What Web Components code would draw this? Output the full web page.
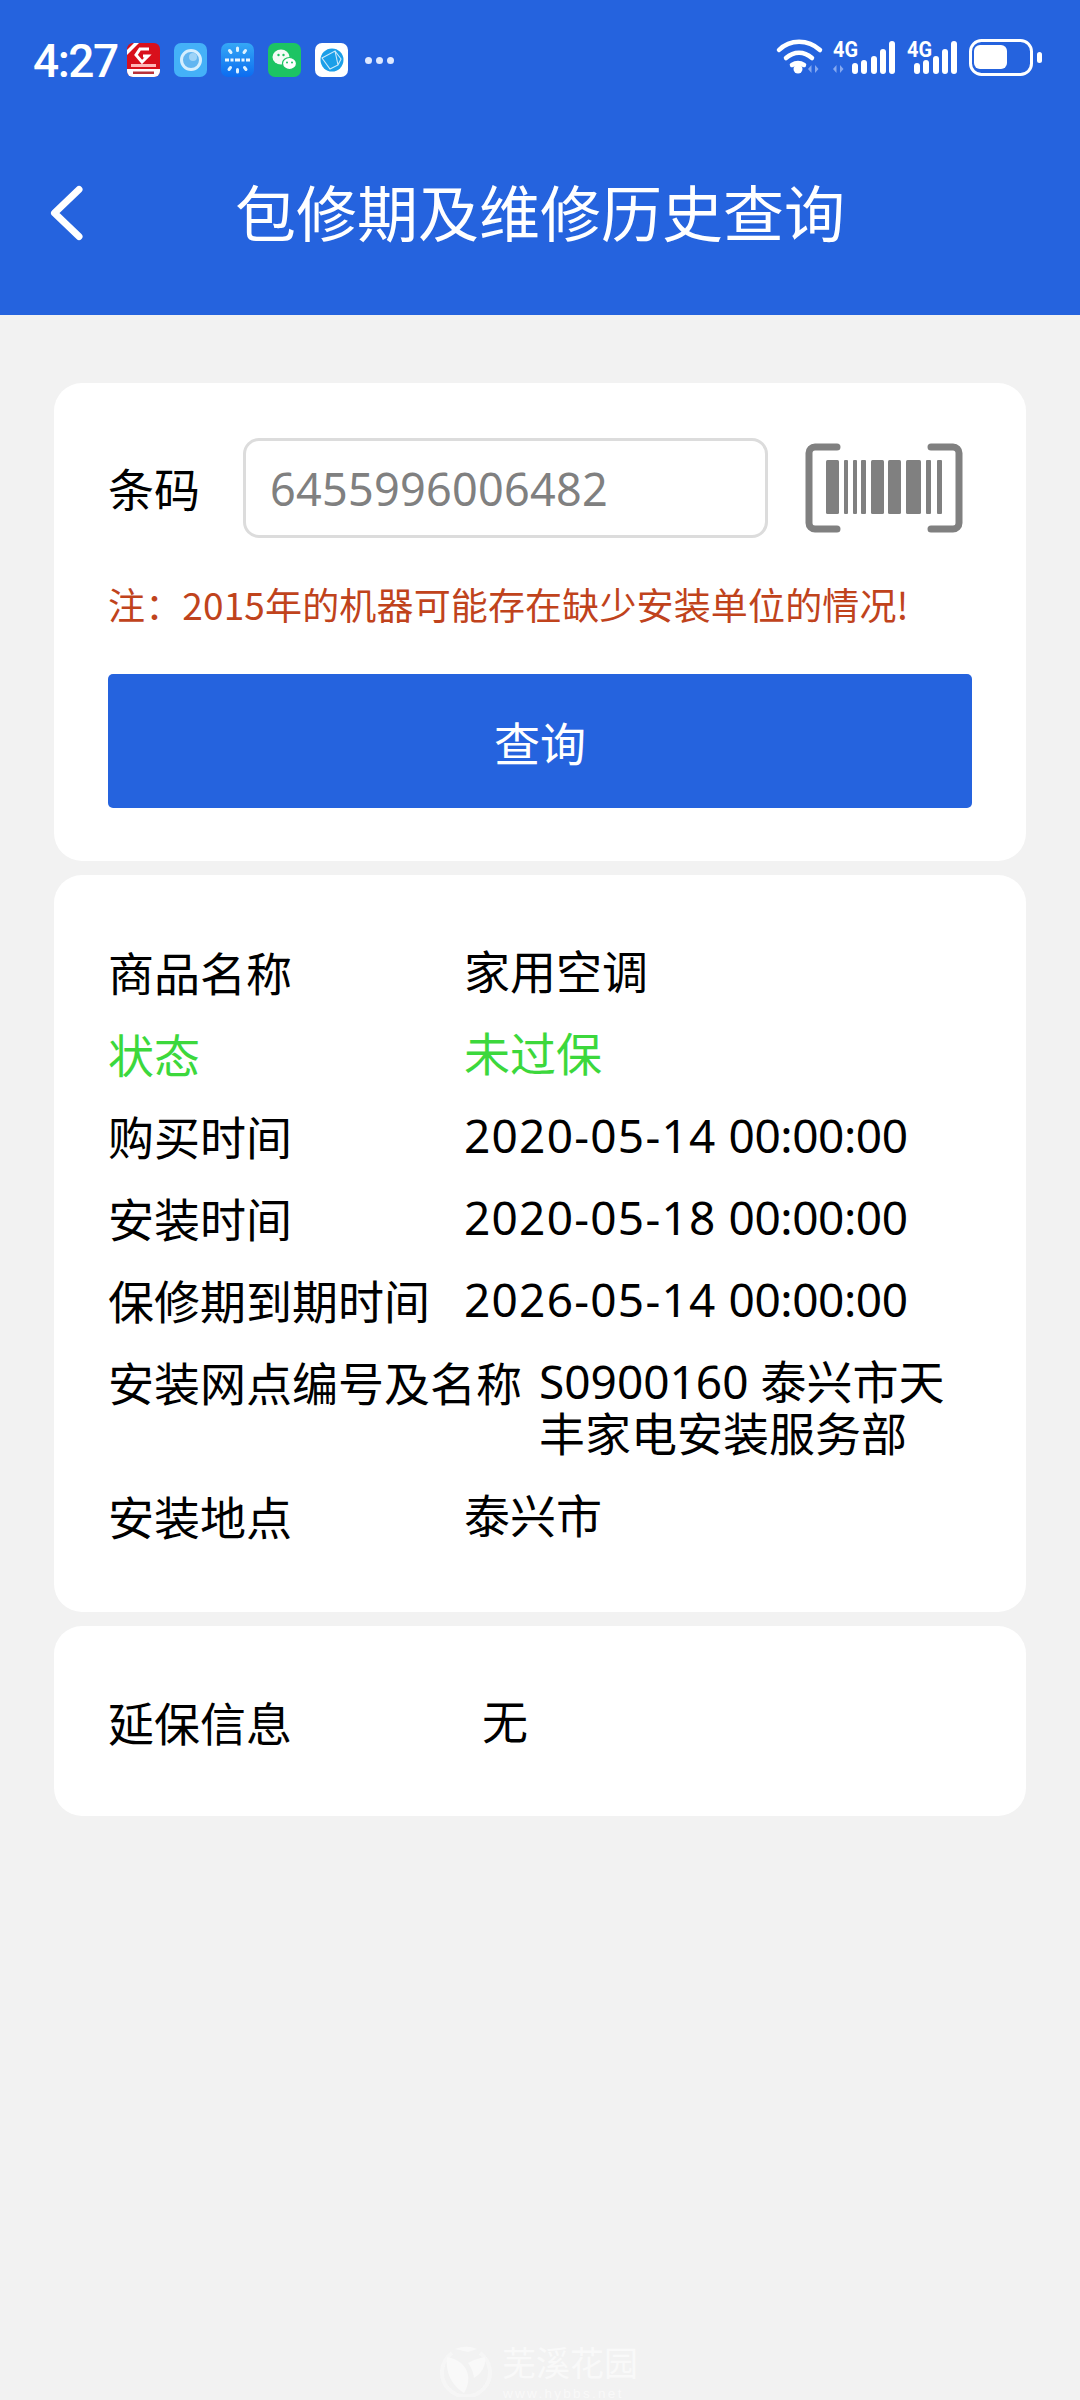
<!DOCTYPE html>
<html lang="zh">
<head>
<meta charset="utf-8">
<title>包修期及维修历史查询</title>
<style>
  html, body { margin: 0; padding: 0; }
  body {
    width: 1080px;
    height: 2400px;
    background: #f2f2f2;
    font-family: "Noto Sans CJK SC", "Noto Sans", sans-serif;
    color: #000;
    position: relative;
    overflow: hidden;
  }
</style>
</head>
<body>
  <top-bar title-text="包修期及维修历史查询"></top-bar>
  <main-list>
    <query-card code="6455996006482" note="注：2015年的机器可能存在缺少安装单位的情况!" action="查询"></query-card>
    <info-card pad="55px 54px 56px">
      <info-row label="商品名称" value="家用空调"></info-row>
      <info-row label="状态" value="未过保" tone="ok"></info-row>
      <info-row label="购买时间" value="2020-05-14 00:00:00" stamp></info-row>
      <info-row label="安装时间" value="2020-05-18 00:00:00" stamp></info-row>
      <info-row label="保修期到期时间" value="2026-05-14 00:00:00" stamp></info-row>
      <info-row label="安装网点编号及名称" value="S0900160 泰兴市天丰家电安装服务部" wide></info-row>
      <info-row label="安装地点" value="泰兴市"></info-row>
    </info-card>
    <info-card pad="54px 54px 54px">
      <info-row label="延保信息" value="无" col="374"></info-row>
    </info-card>
  </main-list>
  <site-mark></site-mark>

<script>
class TopBar extends HTMLElement {
  constructor() {
    super();
    this.attachShadow({mode: 'open'}).innerHTML = `
      <style>
        :host { display: block; height: 315px; background: #2563de; color: #fff; }
        .status { height: 116px; display: flex; align-items: center; padding: 0 35px 0 33px; box-sizing: border-box; }
        .time { font: 500 46px/1 Roboto, sans-serif; width: 94px; letter-spacing: -1.5px; margin-top: 5px; flex: none; }
        .apps { display: flex; gap: 14px; align-items: center; margin-top: 4px; }
        .apps svg { display: block; width: 33px; height: 34px; }
        .dots { display: flex; gap: 4px; margin: 4px 0 0 17px; }
        .dots i { width: 7px; height: 7px; border-radius: 50%; background: #dfe9ff; }
        .sys { margin-left: auto; display: block; flex: none; }
        .nav { height: 199px; display: flex; align-items: center; justify-content: center; position: relative; padding-bottom: 10px; box-sizing: border-box; }
        .back { position: absolute; left: 45px; top: 64px; }
        h1 { margin: 0; font: 400 61px/1 "Noto Sans CJK SC", sans-serif; }
      </style>
      <div class="status">
        <span class="time">4:27</span>
        <div class="apps">
          <svg viewBox="0 0 33 34">
            <rect width="33" height="34" rx="6" fill="#d8101c"/>
            <path d="M0 26h33v2a6 6 0 0 1-6 6H6a6 6 0 0 1-6-6z" fill="#fff"/>
            <path d="M0 7 7 0h5L0 12z" fill="#fff"/>
            <path d="M22 6h-9l-4 6 6 7 6-6h-5" fill="none" stroke="#fff" stroke-width="3"/>
            <rect x="4" y="21" width="25" height="3" fill="#ffb9b9"/>
            <rect x="6" y="28.500" width="21" height="2.500" fill="#b8323a"/>
          </svg>
          <svg viewBox="0 0 33 34">
            <rect width="33" height="34" rx="7" fill="#44b1f8"/>
            <circle cx="17" cy="17" r="9.500" fill="#62b5f0" stroke="#d5eefe" stroke-width="3"/>
            <circle cx="19" cy="14" r="4" fill="#9ed3f7"/>
          </svg>
          <svg viewBox="0 0 33 34">
            <defs><linearGradient id="blueTile" x1="0" y1="0" x2="0" y2="1"><stop offset="0" stop-color="#35a8f6"/><stop offset="1" stop-color="#0c6cf0"/></linearGradient></defs>
            <rect width="33" height="34" rx="7" fill="url(#blueTile)"/>
            <g stroke="#dff2ff" stroke-width="3" stroke-linecap="round">
              <path d="M16.500 5v2.500M8.500 7.500l1.500 2M24.500 7.500l-1.500 2M16.500 26.500v2.500M9.500 24.500l-1.500 2M23.500 24.500l1.500 2"/>
            </g>
            <path d="M4 15.500h4v3H4zM9.500 15.500h3v3h-3zM14 15.500h5v3h-5zM20.500 15.500h3v3h-3zM25 15.500h4v3h-4z" fill="#eef7ff"/>
          </svg>
          <svg viewBox="0 0 33 34">
            <rect width="33" height="34" rx="7" fill="#1cc463"/>
            <ellipse cx="13" cy="14" rx="8.500" ry="7.500" fill="#f4fbf6"/>
            <ellipse cx="21.500" cy="20.500" rx="7" ry="6" fill="#fff" stroke="#1cc463" stroke-width="1.200"/>
            <circle cx="10.500" cy="12" r="1.200" fill="#1cc463"/><circle cx="15.500" cy="12" r="1.200" fill="#1cc463"/>
            <circle cx="19" cy="19.500" r="1" fill="#1cc463"/><circle cx="24" cy="19.500" r="1" fill="#1cc463"/>
          </svg>
          <svg viewBox="0 0 33 34">
            <rect width="33" height="34" rx="7" fill="#fff"/>
            <circle cx="17" cy="17" r="11.500" fill="#1b9fe8"/>
            <path d="M7 15 20 8l3 14-8 4zM20 8l6 8-3 6M7 15l8 11" fill="none" stroke="#cdeafb" stroke-width="1.100"/>
          </svg>
        </div>
        <div class="dots"><i></i><i></i><i></i></div>
        <svg class="sys" width="270" height="44" viewBox="0 0 270 44" fill="#fff">
          <!-- wifi -->
          <g fill="none" stroke="#fff" stroke-linecap="round" stroke-width="4.500">
            <path d="M4 14C15 3 33 3 45 14"/>
            <path d="M11 22c8-7 18-7 26 0"/>
            <path d="M17 29c4-2.500 8-2.500 12 0"/>
          </g>
          <circle cx="23" cy="33" r="4.500"/>
          <path d="M33 33l3.500-4v8zM40 29l3.500 4-3.500 4z" fill="#86a9f0"/>
          <!-- first sim -->
          <text x="58" y="21" font-family="Roboto, sans-serif" font-weight="700" font-size="22" textLength="25" lengthAdjust="spacingAndGlyphs">4G</text>
          <path d="M58 33l3.500-4v8zM65 29l3.500 4-3.500 4z" fill="#86a9f0"/>
          <rect x="77" y="27" width="6" height="11" rx="3"/>
          <rect x="86" y="24" width="6" height="14" rx="3"/>
          <rect x="96" y="20" width="6" height="18" rx="3"/>
          <rect x="105" y="13" width="6" height="25" rx="3"/>
          <rect x="114" y="5" width="6" height="33" rx="3"/>
          <!-- second sim -->
          <text x="132" y="21" font-family="Roboto, sans-serif" font-weight="700" font-size="22" textLength="25" lengthAdjust="spacingAndGlyphs">4G</text>
          <rect x="139" y="27" width="6" height="11" rx="3"/>
          <rect x="148" y="24" width="6" height="14" rx="3"/>
          <rect x="158" y="20" width="6" height="18" rx="3"/>
          <rect x="167" y="13" width="6" height="25" rx="3"/>
          <rect x="176" y="5" width="6" height="33" rx="3"/>
          <!-- battery -->
          <rect x="195.500" y="4.500" width="61" height="34" rx="11" fill="none" stroke="#fff" stroke-width="3"/>
          <rect x="199" y="9" width="33" height="24" rx="6"/>
          <rect x="262" y="16" width="5" height="11" rx="2.500"/>
        </svg>
      </div>
      <div class="nav">
        <svg class="back" width="44" height="66" viewBox="0 0 44 66" fill="none" stroke="#fff" stroke-width="7" stroke-linecap="round" stroke-linejoin="round"><path d="M34 9.500 9.500 33 34 56.500"/></svg>
        <h1></h1>
      </div>`;
  }

  connectedCallback() {
    this.shadowRoot.querySelector('h1').textContent = this.getAttribute('title-text');
  }
}

class MainList extends HTMLElement {
  constructor() {
    super();
    this.attachShadow({mode: 'open'}).innerHTML = `
      <style>
        :host { display: flex; flex-direction: column; gap: 14px; padding: 68px 54px 0; }
      </style>
      <slot></slot>`;
  }
}

class QueryCard extends HTMLElement {
  constructor() {
    super();
    this.attachShadow({mode: 'open'}).innerHTML = `
      <style>
        :host { display: block; background: #fff; border-radius: 28px; padding: 55px 54px 54px; height: 478px; box-sizing: border-box; }
        .line { display: flex; align-items: center; height: 100px; }
        label { font-size: 46px; width: 135px; flex: none; margin-top: -2px; }
        .field {
          width: 525px; height: 100px; box-sizing: border-box; flex: none;
          border: 3px solid #dcdcdc; border-radius: 16px; padding-left: 24px;
          display: flex; align-items: center;
          font: 45px/1 "Noto Sans", sans-serif; color: #808080; letter-spacing: .25px;
        }
        .scan { margin-left: 37px; display: block; }
        .note { margin: 41px 0 0; font-size: 37px; line-height: 50px; color: #c0431c; white-space: nowrap; letter-spacing: .15px; }
        button {
          display: block; width: 100%; height: 134px; margin-top: 45px; border: 0; border-radius: 5px;
          background: #2563de; color: #fff; font: 46px/1 "Noto Sans CJK SC", sans-serif; padding: 0;
        }
      </style>
      <div class="line">
        <label>条码</label>
        <div class="field"></div>
        <svg class="scan" width="160" height="90" viewBox="0 0 160 90" fill="#808080">
          <path d="M32 4H10a6 6 0 0 0-6 6v70a6 6 0 0 0 6 6h22M126 4h22a6 6 0 0 1 6 6v70a6 6 0 0 1-6 6h-22" fill="none" stroke="#808080" stroke-width="7" stroke-linecap="round"/>
          <rect x="21" y="17" width="13" height="54" rx="1.500"/>
          <rect x="39" y="17" width="4" height="54" rx="1"/>
          <rect x="48" y="17" width="4" height="54" rx="1"/>
          <rect x="56" y="17" width="5" height="54" rx="1"/>
          <rect x="66" y="17" width="13" height="54" rx="1.500"/>
          <rect x="83" y="17" width="13" height="54" rx="1.500"/>
          <rect x="101" y="17" width="15" height="54" rx="1.500"/>
          <rect x="121" y="17" width="5" height="54" rx="1"/>
          <rect x="132" y="17" width="5" height="54" rx="1"/>
        </svg>
      </div>
      <p class="note"></p>
      <button></button>`;
  }

  connectedCallback() {
    this.shadowRoot.querySelector('.field').textContent = this.getAttribute('code');
    this.shadowRoot.querySelector('.note').textContent = this.getAttribute('note');
    this.shadowRoot.querySelector('button').textContent = this.getAttribute('action');
  }
}

class InfoCard extends HTMLElement {
  constructor() {
    super();
    this.attachShadow({mode: 'open'}).innerHTML = `
      <style>
        :host { display: block; background: #fff; border-radius: 28px; }
      </style>
      <slot></slot>`;
  }

  connectedCallback() {
    this.style.padding = this.getAttribute('pad');
  }
}

class InfoRow extends HTMLElement {
  constructor() {
    super();
    this.attachShadow({mode: 'open'}).innerHTML = `
      <style>
        :host { display: flex; font-size: 46px; line-height: 52px; padding: 15px 0; }
        :host([tone="ok"]) { color: #3cd83c; }
        .label { flex: none; width: 356px; white-space: nowrap; }
        :host([wide]) .label { width: 431px; }
        .value { flex: 1; font-family: "Noto Sans", "Noto Sans CJK SC", sans-serif; }
        .date { letter-spacing: 1.25px; }
        .clock { letter-spacing: -.45px; }
      </style>
      <span class="label"></span>
      <span class="value"></span>`;
  }

  connectedCallback() {
    const value = this.getAttribute('value');
    const valueEl = this.shadowRoot.querySelector('.value');
    this.shadowRoot.querySelector('.label').textContent = this.getAttribute('label');
    if (this.hasAttribute('stamp')) {
      // date and clock run at different widths
      const [date, clock] = value.split(' ');
      valueEl.innerHTML = `<span class="date">${date}</span> <span class="clock">${clock}</span>`;
    } else {
      valueEl.textContent = value;
    }
    if (this.hasAttribute('col')) {
      this.shadowRoot.querySelector('.label').style.width = this.getAttribute('col') + 'px';
    }
  }
}

// faint forum stamp over the bottom of the page
class SiteMark extends HTMLElement {
  constructor() {
    super();
    this.attachShadow({mode: 'open'}).innerHTML = `
      <style>
        :host { position: absolute; left: 440px; top: 2345px; width: 210px; height: 55px; color: #f9f9f9; }
        svg { position: absolute; left: 0; top: 0; }
        b { position: absolute; left: 62px; top: -7px; font: 400 34px/48px "Noto Sans CJK SC", sans-serif; white-space: nowrap; }
        small { position: absolute; left: 63px; top: 41px; font: 13.500px/15px "Liberation Sans", sans-serif; letter-spacing: 2.300px; white-space: nowrap; }
      </style>
      <svg width="52" height="52" viewBox="0 0 52 52" fill="none" stroke="#f8f8f8">
        <path d="M12 8a24 24 0 1 0 28 0" stroke-width="4" opacity=".7"/>
        <path d="M15 4c8-3 15-3 22 0l-9 3z" fill="#f8f8f8" stroke="none"/>
        <path d="M7 12c11 2 19 8 21 18 1 7-1 13-4 18C14 42 5 30 7 12z" fill="#f9f9f9" stroke="none"/>
        <path d="M45 12c1 9-3 16-11 21-1-7-3-11-6-15 5-3 11-5 17-6z" fill="#f9f9f9" stroke="none"/>
      </svg>
      <b>芜溪花园</b>
      <small>www.hybbs.net</small>`;
  }
}

customElements.define('top-bar', TopBar);
customElements.define('main-list', MainList);
customElements.define('query-card', QueryCard);
customElements.define('info-card', InfoCard);
customElements.define('info-row', InfoRow);
customElements.define('site-mark', SiteMark);
</script>
</body>
</html>
